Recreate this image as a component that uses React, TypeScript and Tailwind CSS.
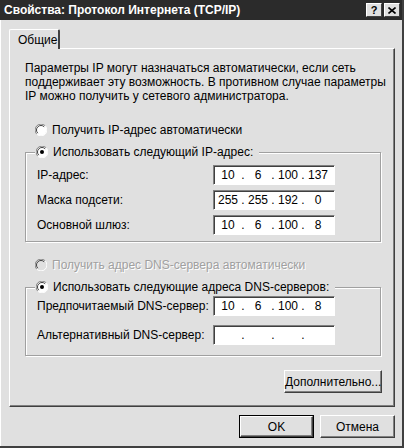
import React from "react";

const bg = "bg-[#e0e0e0]";

function Radio({ checked, disabled }: { checked?: boolean; disabled?: boolean }) {
  return (
    <svg width="12" height="12" viewBox="0 0 12 12" className="shrink-0">
      <circle cx="6" cy="6" r="5.5" fill={disabled ? "#e0e0e0" : "#ffffff"} />
      <path d="M10.2 1.8 A5.5 5.5 0 0 0 1.8 10.2" stroke="#808080" strokeWidth="1" fill="none" />
      <path d="M9.2 2.8 A4.5 4.5 0 0 0 2.8 9.2" stroke="#404040" strokeWidth="1" fill="none" />
      <path d="M1.8 10.2 A5.5 5.5 0 0 0 10.2 1.8" stroke="#ffffff" strokeWidth="1" fill="none" />
      {checked ? <circle cx="6" cy="6" r="2" fill="#000" /> : null}
    </svg>
  );
}

function RadioRow({
  label,
  checked,
  disabled,
  legend,
}: {
  label: string;
  checked?: boolean;
  disabled?: boolean;
  legend?: boolean;
}) {
  return (
    <div
      className={`flex h-[16px] items-center gap-[5px] ${
        legend ? `${bg} -mt-[9px] ml-[9px] w-fit pl-[1px] pr-[6px]` : "ml-[10px]"
      }`}
    >
      <Radio checked={checked} disabled={disabled} />
      <span
        className={
          disabled ? "text-[#a0a0a0] [text-shadow:1px_1px_0_#ffffff]" : "text-black"
        }
      >
        {label}
      </span>
    </div>
  );
}

function IpField({ parts }: { parts: string[] }) {
  return (
    <div className="flex h-[20px] w-[122px] items-center border-t border-l border-[#808080] border-r border-b border-r-white border-b-white bg-white pl-[1px] shadow-[inset_1px_1px_0_#404040]">
      {parts.map((p, i) => (
        <React.Fragment key={i}>
          <span className="w-[26px] text-center">{p}</span>
          {i < 3 ? <span className="w-[4px] text-center">.</span> : null}
        </React.Fragment>
      ))}
    </div>
  );
}

function FieldRow({ label, parts }: { label: string; parts: string[] }) {
  return (
    <div className="grid grid-cols-[176px_122px] items-center">
      <span>{label}</span>
      <IpField parts={parts} />
    </div>
  );
}

function Button({
  children,
  width,
  isDefault,
}: {
  children: React.ReactNode;
  width: string;
  isDefault?: boolean;
}) {
  return (
    <div
      className={`${width} h-[23px] ${
        isDefault ? "border border-black" : ""
      } flex`}
    >
      <div className="flex flex-1 items-center justify-center border-t border-l border-white border-r border-b border-r-[#404040] border-b-[#404040] shadow-[inset_-1px_-1px_0_#808080]">
        {children}
      </div>
    </div>
  );
}

function GroupBox({ children }: { children: React.ReactNode }) {
  return (
    <div className="ml-[15px] w-[356px] border border-[#a0a0a0] shadow-[inset_1px_1px_0_#ffffff,1px_1px_0_#ffffff]">
      {children}
    </div>
  );
}

export default function App() {
  return (
    <div
      className={`flex h-[448px] w-[404px] flex-col overflow-hidden border-r-2 border-b-2 border-[#404040] ${bg} font-['Liberation_Sans',Arial,sans-serif] text-[12px] text-black`}
    >
      <div className="flex h-[20px] shrink-0 items-center justify-between bg-[#2b2b2b] pl-[4px] pr-[2px]">
        <span className="font-bold text-white">Свойства: Протокол Интернета (TCP/IP)</span>
        <div className="flex gap-[2px]">
          <div className={`flex h-[14px] w-[16px] items-center justify-center border-t border-l border-white border-r border-b border-r-[#404040] border-b-[#404040] ${bg} text-[11px] font-bold leading-none`}>
            ?
          </div>
          <div className={`flex h-[14px] w-[16px] items-center justify-center border-t border-l border-white border-r border-b border-r-[#404040] border-b-[#404040] ${bg}`}>
            <svg width="8" height="7" viewBox="0 0 8 7">
              <path d="M0.5 0.5 L7.5 6.5 M7.5 0.5 L0.5 6.5" stroke="#000" strokeWidth="1.6" />
            </svg>
          </div>
        </div>
      </div>

      <div className="flex flex-1 flex-col border-l border-white pl-[8px] pt-[9px]">
        <div
          className={`relative z-10 -mb-px flex h-[20px] w-[51px] items-center rounded-t-[2px] border-t border-l border-white border-r-2 border-r-[#404040] ${bg} pl-[8px]`}
        >
          Общие
        </div>
        <div className="flex h-[359px] w-[386px] flex-col border-t border-l border-white border-r border-b border-r-[#404040] border-b-[#404040] pt-[12px] shadow-[inset_-1px_-1px_0_#808080]">
          <p className="pl-[15px] leading-[14px]">
            Параметры IP могут назначаться автоматически, если сеть
            <br />
            поддерживает эту возможность. В противном случае параметры
            <br />
            IP можно получить у сетевого администратора.
          </p>

          <div className="mt-[19px] pl-[15px]">
            <RadioRow label="Получить IP-адрес автоматически" />
          </div>

          <div className="mt-[14px]">
            <GroupBox>
              <RadioRow label="Использовать следующий IP-адрес:" checked legend />
              <div className="mt-[5px] flex flex-col gap-[5px] pb-[6px] pl-[11px]">
                <FieldRow label="IP-адрес:" parts={["10", "6", "100", "137"]} />
                <FieldRow label="Маска подсети:" parts={["255", "255", "192", "0"]} />
                <FieldRow label="Основной шлюз:" parts={["10", "6", "100", "8"]} />
              </div>
            </GroupBox>
          </div>

          <div className="mt-[15px] pl-[15px]">
            <RadioRow label="Получить адрес DNS-сервера автоматически" disabled />
          </div>

          <div className="mt-[14px]">
            <GroupBox>
              <RadioRow label="Использовать следующие адреса DNS-серверов:" checked legend />
              <div className="mt-[1px] flex flex-col gap-[9px] pb-[10px] pl-[11px]">
                <FieldRow label="Предпочитаемый DNS-сервер:" parts={["10", "6", "100", "8"]} />
                <FieldRow label="Альтернативный DNS-сервер:" parts={["", "", "", ""]} />
              </div>
            </GroupBox>
          </div>

          <div className="mt-[14px] flex justify-end pr-[13px]">
            <Button width="w-[97px]">Дополнительно...</Button>
          </div>
        </div>

        <div className="mt-[8px] flex w-[386px] justify-end gap-[6px]">
          <Button width="w-[75px]" isDefault>
            OK
          </Button>
          <Button width="w-[75px]">Отмена</Button>
        </div>
      </div>
    </div>
  );
}
